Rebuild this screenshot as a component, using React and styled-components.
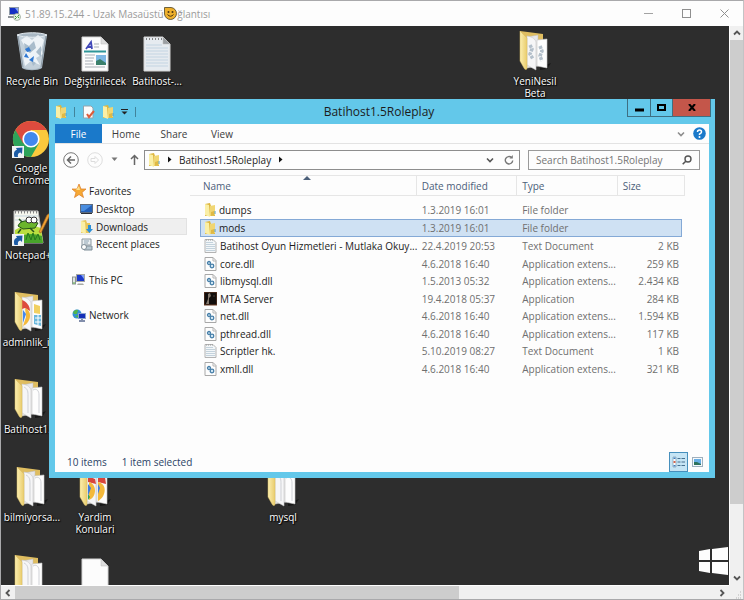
import React from "react";
import styled, { createGlobalStyle } from "styled-components";

const Global = createGlobalStyle`
  *, *::before, *::after { box-sizing: border-box; }
  body { margin: 0; font-family: "Open Sans", "Noto Sans", sans-serif; font-size: 10px; line-height: 14px; color: #1c1c1c; }
  button, input { font: inherit; color: inherit; }
  button { padding: 0; margin: 0; border: 0; background: none; }
  svg { display: block; flex: none; }
`;

/* ---------- remote session frame ---------- */

const Frame = styled.div`
  height: 100vh;
  min-height: 500px;
  display: flex;
  flex-direction: column;
  border: 1px solid #a9a9ab;
  border-right-color: #c3c3c5;
  background: #fdfdfd;
  overflow: hidden;
`;
const FrameTitle = styled.header`
  height: 25px;
  flex: none;
  display: flex;
  align-items: center;
  padding-left: 6px;
  color: #9b9b9b;
`;
const FrameName = styled.h1`
  margin: 0 0 0 4px;
  flex: 1;
  display: flex;
  align-items: center;
  font-size: 10px;
  font-weight: 400;
  white-space: pre;
`;
const Emoji = styled.svg`
  margin-right: -2px;
`;
const FrameButton = styled.button`
  width: 38px;
  height: 24px;
  display: grid;
  place-items: center;
`;
const FrameBody = styled.div`
  flex: 1;
  min-height: 0;
  display: grid;
  grid-template: minmax(0, 1fr) 14px / minmax(0, 1fr) 14px;
`;
const Desktop = styled.main`
  position: relative;
  overflow: hidden;
  background: #2d2d2d;
`;
const Bar = styled.div`
  display: flex;
  flex-direction: ${(p) => (p.$vertical ? "column" : "row")};
  background: #f0f0f0;
  border: 0 solid #fdfdfd;
  border-width: ${(p) => (p.$vertical ? "0 0 0 1px" : "1px 0 0 0")};
`;
const BarArrow = styled.button`
  flex: 0 0 14px;
  display: grid;
  place-items: center;
`;
const Thumb = styled.div`
  flex: 0 0 ${(p) => p.$size};
  background: #cdcdcd;
`;
const Fill = styled.div`
  flex: 1;
`;
const Corner = styled.div`
  background: #f0f0f0;
  display: grid;
  place-items: end;
`;

/* ---------- desktop icons ---------- */

const Shortcut = styled.button`
  position: absolute;
  left: ${(p) => p.$x}px;
  top: ${(p) => p.$y}px;
  width: 62px;
  display: flex;
  flex-direction: column;
  align-items: center;
  gap: 3px;
  color: #fff;
  line-height: 12px;
  text-shadow: 1px 1px 1px #000, 0 0 2px #000;
`;
const ShortcutName = styled.span`
  white-space: pre;
  text-align: center;
`;
const StartMark = styled.svg`
  position: absolute;
  right: 1px;
  bottom: 10px;
`;

/* ---------- explorer window ---------- */

const Explorer = styled.section`
  position: absolute;
  left: 48px;
  right: 14px;
  top: 73px;
  bottom: 107px;
  display: flex;
  flex-direction: column;
  padding: 0 6px 6px;
  background: #63c8ea;
`;
const ExplorerTitle = styled.header`
  height: 25px;
  flex: none;
  display: grid;
  grid-template-columns: 1fr auto 1fr;
  align-items: center;
`;
const QuickTools = styled.div`
  display: flex;
  align-items: center;
  gap: 7px;
`;
const Divider = styled.span`
  width: 1px;
  height: 10px;
  background: #41849b;
`;
const WindowName = styled.h2`
  margin: 0 6px 0 0;
  font-size: 12px;
  line-height: 16px;
  font-weight: 400;
`;
const WindowButtons = styled.div`
  align-self: start;
  justify-self: end;
  margin-right: -2px;
  display: flex;
  height: 18px;
  border: 1px solid #3e6f82;
  border-top: 0;
`;
const WindowButton = styled.button`
  width: ${(p) => (p.$close ? 38 : 22)}px;
  background: ${(p) => (p.$close ? "#c4564a" : "transparent")};
  border-left: ${(p) => (p.$first ? "0" : "1px solid #3e6f82")};
  display: grid;
  place-items: center;
`;
const Client = styled.div`
  flex: 1;
  min-height: 0;
  display: flex;
  flex-direction: column;
  background: #fdfdfd;
`;
const Ribbon = styled.nav`
  flex: none;
  display: flex;
  height: 20px;
  border-bottom: 1px solid #e3e3e3;
  padding-right: 3px;
`;
const RibbonTab = styled.button`
  width: 48px;
  color: #3c3c3c;
`;
const FileTab = styled(RibbonTab)`
  width: 47px;
  background: #1a79ca;
  color: #fff;
`;
const RibbonEnd = styled.div`
  margin-left: auto;
  display: flex;
  align-items: center;
  gap: 8px;
`;
const IconButton = styled.button`
  display: grid;
  place-items: center;
`;
const AddressRow = styled.div`
  flex: none;
  display: flex;
  align-items: center;
  height: 31px;
  padding: 0 9px 0 8px;
`;
const NavButtons = styled.div`
  display: flex;
  align-items: center;
  gap: 8px;
  width: 81px;
  flex: none;
`;
const AddressBox = styled.div`
  flex: 1;
  min-width: 0;
  height: 20px;
  display: flex;
  align-items: center;
  gap: 7px;
  padding: 0 5px 0 3px;
  border: 1px solid #8d8d8d;
`;
const AddressTools = styled.div`
  margin-left: auto;
  display: flex;
  gap: 10px;
`;
const SearchBox = styled.label`
  flex: 0 0 27%;
  height: 20px;
  margin-left: 8px;
  display: flex;
  align-items: center;
  padding: 0 7px;
  border: 1px solid #9a9a9a;
`;
const SearchInput = styled.input`
  flex: 1;
  min-width: 0;
  padding: 0;
  border: 0;
  outline: 0;
  background: none;
  &::placeholder { color: #747474; opacity: 1; }
`;
const Panes = styled.div`
  flex: 1;
  min-height: 0;
  display: flex;
`;
const Places = styled.nav`
  flex: 0 0 132px;
  padding-top: 7px;
`;
const PlaceGroup = styled.div`
  margin-bottom: 18px;
`;
const Place = styled.button`
  width: 100%;
  height: ${(p) => (p.$odd ? 17 : 18)}px;
  display: flex;
  align-items: center;
  gap: 3px;
  padding-left: ${(p) => (p.$nested ? 24 : 16)}px;
  border: 1px solid ${(p) => (p.$on ? "#e2e2e2" : "transparent")};
  background: ${(p) => (p.$on ? "#efefef" : "transparent")};
`;
const Files = styled.div`
  flex: 1;
  min-width: 0;
  padding: 0 24px 0 3px;
`;
const FileTable = styled.table`
  width: 100%;
  border-collapse: separate;
  border-spacing: 0;
  table-layout: fixed;
`;
const Col = styled.col`
  width: ${(p) => p.$w};
`;
const HeadCell = styled.th`
  position: relative;
  height: 21px;
  padding: 0 5px;
  padding-left: ${(p) => (p.$lead ? 13 : 5)}px;
  text-align: left;
  font-weight: 400;
  color: #4c607a;
  border: 1px solid #e6e6e6;
  border-left: 0;
`;
const SortMark = styled.svg`
  position: absolute;
  left: 50%;
  top: 0;
`;
const Gap = styled.tr`
  height: 5px;
`;
const Row = styled.tr`
  height: 17px;
  &:nth-child(even) { height: 18px; }
`;
const Cell = styled.td`
  padding: 0 3px 0 5px;
  color: #6f6f6f;
  white-space: nowrap;
  text-align: ${(p) => (p.$end ? "right" : "left")};
  background: ${(p) => (p.$on ? "#cfe1f3" : "transparent")};
  border: 0 solid #84a9d6;
  border-width: ${(p) => (p.$on ? "1px 0" : "0")};
  &:nth-child(4) { border-right-width: ${(p) => (p.$on ? "1px" : "0")}; }
`;
const NameCell = styled(Cell)`
  padding: 0 0 0 10px;
  color: #1c1c1c;
  background: ${(p) => (p.$on ? "linear-gradient(#84a9d6, #84a9d6) 10px 0 / 1px 100% no-repeat, linear-gradient(#cfe1f3, #cfe1f3) 10px 0 / 100% 100% no-repeat" : "transparent")};
  border: 0;
`;
const FileName = styled.span`
  display: flex;
  align-items: center;
  gap: 3px;
  height: ${(p) => (p.$on ? 18 : 17)}px;
  padding-left: 4px;
  border: 0 solid #84a9d6;
  border-width: ${(p) => (p.$on ? "1px 0" : "0")};
`;
const Status = styled.footer`
  flex: none;
  height: 20px;
  display: flex;
  align-items: center;
  gap: 15px;
  padding: 0 2px 0 12px;
  color: #2b4265;
`;
const Views = styled.div`
  margin-left: auto;
  display: flex;
  height: 20px;
`;
const ViewButton = styled.button`
  width: 19px;
  display: grid;
  place-items: center;
  border: 1px solid ${(p) => (p.$on ? "#4790bd" : "transparent")};
  background: ${(p) => (p.$on ? "#c6e5f5" : "transparent")};
`;

/* ---------- drawings ---------- */

const Svg = ({ w, h, vb, children }) => (
  <svg width={w} height={h} viewBox={vb || `0 0 ${w} ${h}`} aria-hidden="true">{children}</svg>
);

const ChromeMark = ({ cx = 0, cy = 0, s = 1 }) => (
  <g transform={`translate(${cx} ${cy}) scale(${s})`}>
    <circle r="18" fill="#fbc93d" />
    <path d="M-15.6-9A18 18 0 0 0 0 18L7.8 4.500 0 0Z" fill="#2da35a" />
    <path d="M-15.6-9A18 18 0 0 1 15.6-9H0V0L-7.8 4.500Z" fill="#dd4b3e" />
    <circle r="8.6" fill="#fff" />
    <circle r="7" fill="#4288ee" />
  </g>
);

const LinkBadge = ({ x, y }) => (
  <g transform={`translate(${x} ${y})`}>
    <rect width="12" height="12" fill="#f1f3f5" />
    <path d="M2.500 11C1 6.500 3 4 5 4L4 2L10.500 1.500 10 8L8.500 6.500C6 7 5.500 8.500 6 11Z" fill="#1c5ba4" />
  </g>
);

const BigFolder = ({ kind }) => (
  <Svg w={34} h={42}>
    <defs>
      <linearGradient id="fold" x1="0" x2="1"><stop offset="0" stopColor="#fbeeb0" /><stop offset="1" stopColor="#e9cc6c" /></linearGradient>
    </defs>
    <path d="M22 37L33 33 29 39 22 40Z" fill="#171717" />
    <path d="M2 1L25 4V32L9 38 2 30Z" fill="#dfbd60" />
    <path d="M9 7L20 5V36L9 38Z" fill="#e8e8ea" stroke="#bcbcbc" strokeWidth=".5" />
    <path d="M9 6C15 7 17 9 18 12V40L9 35Z" fill="#f6f6f7" stroke="#c8c8c8" strokeWidth=".6" />
    <path d="M19 10L29 9V38L19 36Z" fill="#fdfdfd" stroke="#c8c8c8" strokeWidth=".6" />
    {!kind && <path d="M11 9C15 11 15 14 15 18V35M20 12C24 10 26 13 26 17V35" fill="none" stroke="#cfd1d6" />}
    {kind === "chrome" && (
      <g>
        <path d="M9 9C14 11 17 15 17 20L12 17 9 18Z" fill="#dd4b3e" />
        <path d="M12 17C20 20 18 32 10 35L13 26Z" fill="#f4b93a" />
        <path d="M10 19L13 23 10 32Z" fill="#4288ee" />
        <path d="M21 13L27 15V23L21 22Z" fill="#f1d061" />
        <path d="M21 24H28V35L21 33Z" fill="#69b7dc" />
        <path d="M22 27H28M22 31H28M25 24V34" stroke="#fff" />
      </g>
    )}
    {kind === "twins" && (
      <g>
        <path d="M10 10L17 13 18 18 10 16ZM20 9L27 11 28 18 20 16Z" fill="#d8453b" />
        <path d="M11 16C19 18 19 31 11 34ZM20 16C30 18 28 31 20 35Z" fill="#f4b93a" />
        <path d="M10 18L13 22 10 30ZM20 18L22 22 20 28Z" fill="#3b7be0" />
        <path d="M10 28L12 31 10 34Z" fill="#2da35a" />
      </g>
    )}
    {kind === "config" && (
      <path d="M12 15L14 19 12 24 15 29M22 16L24 21 22 26 24 31" fill="none" stroke="#b3bfca" strokeWidth="3.500" strokeDasharray="3 1" />
    )}
    <path d="M2 1L9 8V38C9 40 7 40 6 38L2 31Z" fill="url(#fold)" stroke="#d9bd62" strokeWidth=".5" />
  </Svg>
);

const Bin = () => (
  <Svg w={32} h={40}>
    <path d="M1 3C8 0 25 0 31 3L26 36C22 39 10 39 6 36Z" fill="#a9b8c4" />
    <path d="M3 5L7 35C12 38 20 38 25 35L29 5Z" fill="#c3d0da" />
    <path d="M5 8L11 4 16 8 22 3 28 8 25 18 27 22 20 26 24 33 15 29 9 34 7 24 11 18Z" fill="#eef3f7" />
    <path d="M8 11L13 14 18 9 20 16 14 21 9 18ZM20 20L25 14 25 25ZM15 28L20 31 17 34Z" fill="#a9bccb" />
    <path d="M9 17L13 15 15 19 11 20ZM8 25L10 21 13 26ZM13 28L18 24 17 30Z" fill="#2f78d2" />
    <path d="M1 3C8 0 25 0 31 3 26 6 7 6 1 3Z" fill="none" stroke="#e4ebf0" />
    <path d="M2 4L7 35M30 4L25 35" stroke="#8d9ba6" />
  </Svg>
);

const BigPage = ({ kind }) => (
  <Svg w={28} h={36}>
    <path d="M1 1H20L27 8V35H1Z" fill={kind === "note" ? "#e6ebf0" : "#fcfcfc"} stroke="#d4d4d4" />
    <path d="M20 1V8H27Z" fill={kind === "note" ? "#9a9ea2" : "#dcdcdc"} stroke="#b9b9b9" strokeWidth=".5" />
    {kind === "rich" && (
      <g>
        <path d="M5 13L10 6 11 13M7 11H11" stroke="#4147b8" strokeWidth="1.800" fill="none" />
        <path d="M13 8H18M13 11H18M4 19H14M4 22H13M4 25H12M4 28H13M4 31H24" stroke="#a7adb5" />
        <path d="M3 15.500H25" stroke="#2f9699" strokeWidth="2" />
        <rect x="15" y="19" width="10" height="10" fill="#7db7e4" />
        <path d="M15 25L19 23 25 27V29H15Z" fill="#3b806b" />
      </g>
    )}
    {kind === "note" && (
      <g>
        <path d="M3 3H19" stroke="#858585" strokeWidth="2" strokeDasharray="1 2" />
        <path d="M3 9H19M3 12H25M3 15H25M3 18H25M3 21H25M3 24H25M3 27H25M3 30H25" stroke="#c3d4e2" />
      </g>
    )}
  </Svg>
);

const ChromeBig = () => (
  <Svg w={38} h={39}>
    <ChromeMark cx={19} cy={19} />
    <LinkBadge x={0} y={26} />
  </Svg>
);

const NotepadBig = () => (
  <Svg w={38} h={38}>
    <path d="M2 3H26L31 35H2Z" fill="#f6f7ee" stroke="#b8b8b8" />
    <path d="M3 4H26" stroke="#868686" strokeWidth="3" strokeDasharray="1 2" />
    <path d="M3 8H26M3 12H27" stroke="#c5d5df" />
    <path d="M3 22Q16 14 29 20L31 35H3Z" fill="#b9de3f" />
    <path d="M3 31Q16 23 30 28L31 35H3Z" fill="#48a52b" />
    <path d="M14 32L16 25 19 32 21 25 23 32 26 26 28 32" stroke="#25761c" strokeWidth="1" fill="none" />
    <path d="M6 18Q8 12 17 13L26 15 23 20 11 21Z" fill="#6bb52c" stroke="#25531b" />
    <path d="M9 21L6 25M18 20L22 24M10 14L7 11" stroke="#25531b" strokeWidth="1.500" />
    <circle cx="17" cy="12" r="3" fill="#fff" stroke="#333" />
    <circle cx="22" cy="12" r="3" fill="#fff" stroke="#333" />
    <path d="M27 24L35 7 38 5 37 9 29 25Z" fill="#efa134" stroke="#9c5e1a" strokeWidth=".6" />
    <LinkBadge x={0} y={26} />
  </Svg>
);

const Folder = () => (
  <Svg w={12} h={14}>
    <path d="M1 1L6 0 7 3 11 3V13H1Z" fill="#ddb63f" />
    <path d="M6 3L11 2V12L6 13Z" fill="#f0d673" />
    <path d="M1 1L5 2 6 14 1 12Z" fill="#faefa6" />
    <path d="M7 9L10 8V12L7 13Z" fill="#dfb945" />
    <path d="M11 8V11" stroke="#5b9ec4" />
  </Svg>
);
const Dll = () => (
  <Svg w={13} h={14}>
    <path d="M1 .5H9L12 3.500V13.500H1Z" fill="#fdfdfd" stroke="#a8a8a8" />
    <path d="M9 .5V4H12" fill="none" stroke="#b5b5b5" />
    <circle cx="5" cy="6" r="1.500" fill="#d9edf8" stroke="#477fa9" strokeWidth="1.300" />
    <circle cx="8" cy="9" r="1.800" fill="#d9edf8" stroke="#477fa9" strokeWidth="1.300" />
  </Svg>
);
const Txt = () => (
  <Svg w={13} h={14}>
    <path d="M1 .5H9L12 3.500V13.500H1Z" fill="#f3f6f8" stroke="#b3b3b3" />
    <path d="M2 3.500H9M2 5.500H11M2 7.500H11M2 9.500H11M2 11.500H11" stroke="#c3d2dc" />
    <path d="M2 1H9" stroke="#999" strokeDasharray="1 1" />
  </Svg>
);
const Mta = () => (
  <Svg w={13} h={14}>
    <rect y="0" width="13" height="13" fill="#120e0c" stroke="#6f3f26" />
    <path d="M4 2L6 1 7 4 5 6 5 12 2 12 4 7Z" fill="#83786d" />
    <path d="M10 3V5" stroke="#493a34" />
  </Svg>
);
const icons = { folder: Folder, dll: Dll, txt: Txt, mta: Mta };

const Star = () => (
  <Svg w={14} h={14}>
    <path d="M7 0L9 5 14 5 10 8.500 11.500 13.500 7 10.500 2.500 13.500 4 8.500 0 5 5 5Z" fill="#f6a935" stroke="#dd7b24" strokeWidth=".7" />
    <path d="M7 2L8 6 4 6Z" fill="#fde08c" />
  </Svg>
);
const Screen = () => (
  <Svg w={13} h={12}>
    <rect x=".5" y="1.500" width="12" height="8" fill="#2561b8" stroke="#5e6c80" />
    <path d="M1 2H12L4 8H1Z" fill="#4a8ee0" />
    <path d="M1 10.500H12" stroke="#2b2f36" />
  </Svg>
);
const DownFolder = () => (
  <Svg w={13} h={14}>
    <path d="M1 1L6 0 7 3 10 3V13H1Z" fill="#e8c65c" />
    <path d="M1 1L5 2 6 14 1 12Z" fill="#faefa6" />
    <path d="M8 5H11V9H13L9.500 13 6 9H8Z" fill="#2c8fd6" />
  </Svg>
);
const Recent = () => (
  <Svg w={13} h={13}>
    <path d="M2 1H11V7H5V10H2Z" fill="#e9eef1" stroke="#8c98a0" />
    <path d="M4 3H9M4 5H8" stroke="#8fa5b4" />
    <path d="M4 8H12V12H4Z" fill="#b9c8d1" stroke="#7e8d97" />
    <circle cx="4" cy="9" r="2.500" fill="#fff" stroke="#7e8d97" />
  </Svg>
);
const Pc = () => (
  <Svg w={14} h={13}>
    <rect x=".5" y="4" width="3" height="7" fill="#dfe4e4" stroke="#8b9494" />
    <rect x="4.500" y="1.500" width="8" height="7" fill="#1b38c9" stroke="#a5a7a4" />
    <path d="M9 2H12V6Z" fill="#7fa0f5" />
    <path d="M6 10.500H11L12 12H5Z" fill="#a7aaa6" />
    <path d="M1 10H3" stroke="#5fb446" />
  </Svg>
);
const Net = () => (
  <Svg w={14} h={13}>
    <circle cx="5" cy="5" r="4.500" fill="#3390d6" />
    <path d="M1 3Q4 0 6 1L5 5 2 5ZM3 7L6 6V9Z" fill="#52b64b" />
    <rect x="6.500" y="4.500" width="7" height="5" fill="#1430b8" stroke="#8aa2cb" />
    <path d="M10 10V11M7 12H13" stroke="#5a6a90" strokeWidth="1.500" />
  </Svg>
);
const Chevron = ({ d = "down", color = "#555", s = 8, sw = 1.6 }) => {
  const paths = { down: "M1 2.500L4 5.500L7 2.500", up: "M1 5.500L4 2.500L7 5.500", left: "M5.500 1L2.500 4L5.500 7", right: "M2.500 1L5.500 4L2.500 7" };
  return <Svg w={s} h={s} vb="0 0 8 8"><path d={paths[d]} fill="none" stroke={color} strokeWidth={sw} /></Svg>;
};

/* ---------- content ---------- */

const shortcuts = [
  { x: 0, y: 6, name: "Recycle Bin", art: <Bin /> },
  { x: 63, y: 10, name: "Değiştirilecek", art: <BigPage kind="rich" /> },
  { x: 125, y: 10, name: "Batihost-...", art: <BigPage kind="note" /> },
  { x: 503, y: 4, name: "YeniNesil\nBeta", art: <BigFolder kind="config" /> },
  { x: -1, y: 94, name: "Google\nChrome", art: <ChromeBig /> },
  { x: -1, y: 182, name: "Notepad++", art: <NotepadBig /> },
  { x: -2, y: 265, name: "adminlik_i...", art: <BigFolder kind="chrome" /> },
  { x: -2, y: 352, name: "Batihost1...", art: <BigFolder /> },
  { x: 0, y: 440, name: "bilmiyorsa...", art: <BigFolder /> },
  { x: 63, y: 440, name: "Yardim\nKonulari", art: <BigFolder kind="twins" /> },
  { x: 251, y: 440, name: "mysql", art: <BigFolder /> },
  { x: -2, y: 528, name: "", art: <BigFolder /> },
  { x: 63, y: 532, name: "", art: <BigPage /> },
];

const files = [
  ["folder", "dumps", "1.3.2019 16:01", "File folder", ""],
  ["folder", "mods", "1.3.2019 16:01", "File folder", ""],
  ["txt", "Batihost Oyun Hizmetleri - Mutlaka Okuy...", "22.4.2019 20:53", "Text Document", "2 KB"],
  ["dll", "core.dll", "4.6.2018 16:40", "Application extens...", "259 KB"],
  ["dll", "libmysql.dll", "1.5.2013 05:32", "Application extens...", "2.434 KB"],
  ["mta", "MTA Server", "19.4.2018 05:37", "Application", "284 KB"],
  ["dll", "net.dll", "4.6.2018 16:40", "Application extens...", "1.594 KB"],
  ["dll", "pthread.dll", "4.6.2018 16:40", "Application extens...", "117 KB"],
  ["txt", "Scriptler hk.", "5.10.2019 08:27", "Text Document", "1 KB"],
  ["dll", "xmll.dll", "4.6.2018 16:40", "Application extens...", "321 KB"],
];

function ExplorerWindow() {
  return (
    <Explorer aria-label="Batihost1.5Roleplay">
      <ExplorerTitle>
        <QuickTools>
          <Folder />
          <Divider />
          <IconButton aria-label="Properties">
            <Svg w={13} h={14}>
              <path d="M1.500 1H9L11 3V13H1.500Z" fill="#fbfbfb" stroke="#93a4ad" />
              <path d="M5 9L7 12 12 6" fill="none" stroke="#dc5c3c" strokeWidth="2" />
            </Svg>
          </IconButton>
          <IconButton aria-label="New folder"><Folder /></IconButton>
          <IconButton aria-label="Customize">
            <Svg w={7} h={6}><path d="M0 .5H7" stroke="#222" /><path d="M.5 2.500H6.500L3.500 5.500Z" fill="#222" /></Svg>
          </IconButton>
          <Divider />
        </QuickTools>
        <WindowName>Batihost1.5Roleplay</WindowName>
        <WindowButtons>
          <WindowButton $first aria-label="Minimize"><Svg w={9} h={9}><path d="M0 7H9" stroke="#000" strokeWidth="3" /></Svg></WindowButton>
          <WindowButton aria-label="Maximize"><Svg w={9} h={7}><rect x="1" y="1" width="7" height="5" fill="none" stroke="#000" strokeWidth="2" /></Svg></WindowButton>
          <WindowButton $close aria-label="Close"><Svg w={8} h={7}><path d="M1 0L7 7M7 0L1 7" stroke="#000" strokeWidth="2" /></Svg></WindowButton>
        </WindowButtons>
      </ExplorerTitle>
      <Client>
        <Ribbon>
          <FileTab>File</FileTab>
          <RibbonTab>Home</RibbonTab>
          <RibbonTab>Share</RibbonTab>
          <RibbonTab>View</RibbonTab>
          <RibbonEnd>
            <IconButton aria-label="Expand the ribbon"><Chevron color="#8d8d8d" /></IconButton>
            <IconButton aria-label="Help">
              <Svg w={13} h={13}>
                <circle cx="6.500" cy="6.500" r="6.300" fill="#1a79ca" />
                <path d="M4.500 5Q4.500 3 6.500 3T8.500 5Q8.500 6 7.300 6.500T6.500 8" fill="none" stroke="#fff" strokeWidth="1.500" />
                <circle cx="6.500" cy="10" r="1" fill="#fff" />
              </Svg>
            </IconButton>
          </RibbonEnd>
        </Ribbon>
        <AddressRow>
          <NavButtons>
            <IconButton aria-label="Back">
              <Svg w={16} h={16}><circle cx="8" cy="8" r="7.300" fill="none" stroke="#777" /><path d="M12 8H5M8 4.500L4.500 8 8 11.500" fill="none" stroke="#666" strokeWidth="1.500" /></Svg>
            </IconButton>
            <IconButton aria-label="Forward">
              <Svg w={16} h={16}><circle cx="8" cy="8" r="7.300" fill="none" stroke="#dedede" /><path d="M4 6.500H8V4.500L11.500 8 8 11.500V9.500H4Z" fill="none" stroke="#dcdcdc" /></Svg>
            </IconButton>
            <IconButton aria-label="Recent locations"><Svg w={7} h={5}><path d="M.5 .5H6.500L3.500 4Z" fill="#777" /></Svg></IconButton>
            <IconButton aria-label="Up"><Svg w={14} h={11}><path d="M8.500 11V2M5 5L8.500 1.500 12 5" fill="none" stroke="#666" strokeWidth="1.500" /></Svg></IconButton>
          </NavButtons>
          <AddressBox>
            <Folder />
            <Svg w={5} h={7}><path d="M1 .5L4.500 3.500 1 6.500Z" fill="#111" /></Svg>
            <span>Batihost1.5Roleplay</span>
            <Svg w={5} h={7}><path d="M1 .5L4.500 3.500 1 6.500Z" fill="#111" /></Svg>
            <AddressTools>
              <IconButton aria-label="Previous locations"><Chevron /></IconButton>
              <IconButton aria-label="Refresh">
                <Svg w={10} h={10}><path d="M7.500 2.500A3.700 3.700 0 1 0 8.700 5.500" fill="none" stroke="#777" strokeWidth="1.400" /><path d="M5.500 3.500H8.800V0Z" fill="#777" /></Svg>
              </IconButton>
            </AddressTools>
          </AddressBox>
          <SearchBox>
            <SearchInput type="text" placeholder="Search Batihost1.5Roleplay" aria-label="Search Batihost1.5Roleplay" />
            <Svg w={10} h={10}><circle cx="6" cy="4" r="3" fill="none" stroke="#555" strokeWidth="1.400" /><path d="M4 6L.7 9.300" stroke="#555" strokeWidth="1.600" /></Svg>
          </SearchBox>
        </AddressRow>
        <Panes>
          <Places>
            <PlaceGroup>
              <Place><Star />Favorites</Place>
              <Place $nested><Screen />Desktop</Place>
              <Place $nested $on $odd><DownFolder />Downloads</Place>
              <Place $nested><Recent />Recent places</Place>
            </PlaceGroup>
            <PlaceGroup><Place $odd><Pc />This PC</Place></PlaceGroup>
            <PlaceGroup><Place><Net />Network</Place></PlaceGroup>
          </Places>
          <Files>
            <FileTable>
              <colgroup>
                <Col $w="45.8%" />
                <Col $w="20.3%" />
                <Col $w="20.3%" />
                <Col />
                <Col $w="3px" />
              </colgroup>
              <thead>
                <tr>
                  <HeadCell $lead>Name<SortMark width="8" height="4" aria-hidden="true"><path d="M0 4L4 0 8 4Z" fill="#4c607a" /></SortMark></HeadCell>
                  <HeadCell>Date modified</HeadCell>
                  <HeadCell>Type</HeadCell>
                  <HeadCell colSpan={2}>Size</HeadCell>
                </tr>
              </thead>
              <tbody>
                <Gap><td colSpan={5} /></Gap>
                {files.map(([kind, name, date, type, size]) => {
                  const Icon = icons[kind];
                  const on = name === "mods";
                  return (
                    <Row key={name}>
                      <NameCell $on={on}><FileName $on={on}><Icon />{name}</FileName></NameCell>
                      <Cell $on={on}>{date}</Cell>
                      <Cell $on={on}>{type}</Cell>
                      <Cell $on={on} $end>{size}</Cell>
                    </Row>
                  );
                })}
              </tbody>
            </FileTable>
          </Files>
        </Panes>
        <Status>
          <span>10 items</span>
          <span>1 item selected</span>
          <Views>
            <ViewButton $on aria-label="Details view">
              <Svg w={13} h={12}>
                <path d="M1 1H4V11H1Z" fill="#fff" stroke="#7d9bb0" strokeWidth=".7" />
                <path d="M2.500 1.500V3" stroke="#3a7fc2" strokeWidth="2" /><path d="M2.500 5V7" stroke="#d2654d" strokeWidth="2" /><path d="M2.500 9V10.500" stroke="#3a7fc2" strokeWidth="2" />
                <path d="M5.500 2.500H8.500M9.500 2.500H13M5.500 6H8.500M9.500 6H13M5.500 9.500H8.500M9.500 9.500H13" stroke="#49718f" />
              </Svg>
            </ViewButton>
            <ViewButton aria-label="Large icons view">
              <Svg w={11} h={10}>
                <rect x=".5" y=".5" width="10" height="9" fill="#f6f9fb" stroke="#9fb0bd" />
                <rect x="2" y="2" width="7" height="6" fill="#67aee5" />
                <path d="M2 5L5 5 9 7V8H2Z" fill="#2f735c" />
              </Svg>
            </ViewButton>
          </Views>
        </Status>
      </Client>
    </Explorer>
  );
}

export default function App() {
  return (
    <>
      <Global />
      <Frame>
        <FrameTitle>
          <Svg w={14} h={14}>
            <rect x="2.500" y=".5" width="9" height="7" fill="#1530c4" stroke="#8f9aa8" />
            <path d="M8 1H11V5Z" fill="#7fa0f5" />
            <path d="M1 9H9L8 11H1Z" fill="#8d9299" />
            <circle cx="10" cy="10" r="3.500" fill="#e9f4e7" stroke="#8d9a8a" strokeWidth=".7" />
            <path d="M8 9L9.500 10.500 8 12M12 8L10.700 9.500 12 11" fill="none" stroke="#3d9b38" />
          </Svg>
          <FrameName>
            <span>51.89.15.244 - Uzak Masaüstü</span>
            <Emoji width="13" height="13" viewBox="0 0 13 13" aria-hidden="true">
              <path d="M.5 .5H7A6 6 0 1 1 .5 7Z" fill="#eeb02c" stroke="#4d4326" strokeWidth=".8" />
              <circle cx="4.500" cy="5" r="1" fill="#4a3512" /><circle cx="8.500" cy="5" r="1" fill="#4a3512" />
              <path d="M3.500 7.500Q6.500 11 9.500 7.500" fill="none" stroke="#4a3512" />
            </Emoji>
            <span> ğlantısı</span>
          </FrameName>
          <FrameButton aria-label="Minimize session"><Svg w={9} h={9}><path d="M0 4.500H9" stroke="#a3a3a3" /></Svg></FrameButton>
          <FrameButton aria-label="Maximize session"><Svg w={9} h={9}><rect x=".5" y=".5" width="8" height="8" fill="none" stroke="#8f8f8f" /></Svg></FrameButton>
          <FrameButton aria-label="Close session"><Svg w={9} h={9}><path d="M.5 .5L8.500 8.500M8.500 .5L.5 8.500" stroke="#8f8f8f" /></Svg></FrameButton>
        </FrameTitle>
        <FrameBody>
          <Desktop>
            {shortcuts.map((s, i) => (
              <Shortcut key={i} $x={s.x} $y={s.y} aria-label={s.name ? undefined : "Desktop item"}>
                {s.art}
                {s.name && <ShortcutName>{s.name}</ShortcutName>}
              </Shortcut>
            ))}
            <StartMark width="29" height="28" aria-hidden="true">
              <path d="M0 4L11 2V13H0ZM13 2L29 0V13H13ZM0 15H11V26L0 24ZM13 15H29V28L13 26Z" fill="#fdfdfd" />
            </StartMark>
            <ExplorerWindow />
          </Desktop>
          <Bar $vertical>
            <BarArrow aria-label="Scroll up"><Chevron d="up" sw={1.8} /></BarArrow>
            <Thumb $size="83%" />
            <Fill />
            <BarArrow aria-label="Scroll down"><Chevron sw={1.8} /></BarArrow>
          </Bar>
          <Bar>
            <BarArrow aria-label="Scroll left"><Chevron d="left" sw={1.8} /></BarArrow>
            <Thumb $size="61%" />
            <Fill />
            <BarArrow aria-label="Scroll right"><Chevron d="right" sw={1.8} /></BarArrow>
          </Bar>
          <Corner><Svg w={8} h={8}><path d="M5 1H7M3 4H7M1 7H7" stroke="#b5b5b5" strokeDasharray="1 1" /></Svg></Corner>
        </FrameBody>
      </Frame>
    </>
  );
}
